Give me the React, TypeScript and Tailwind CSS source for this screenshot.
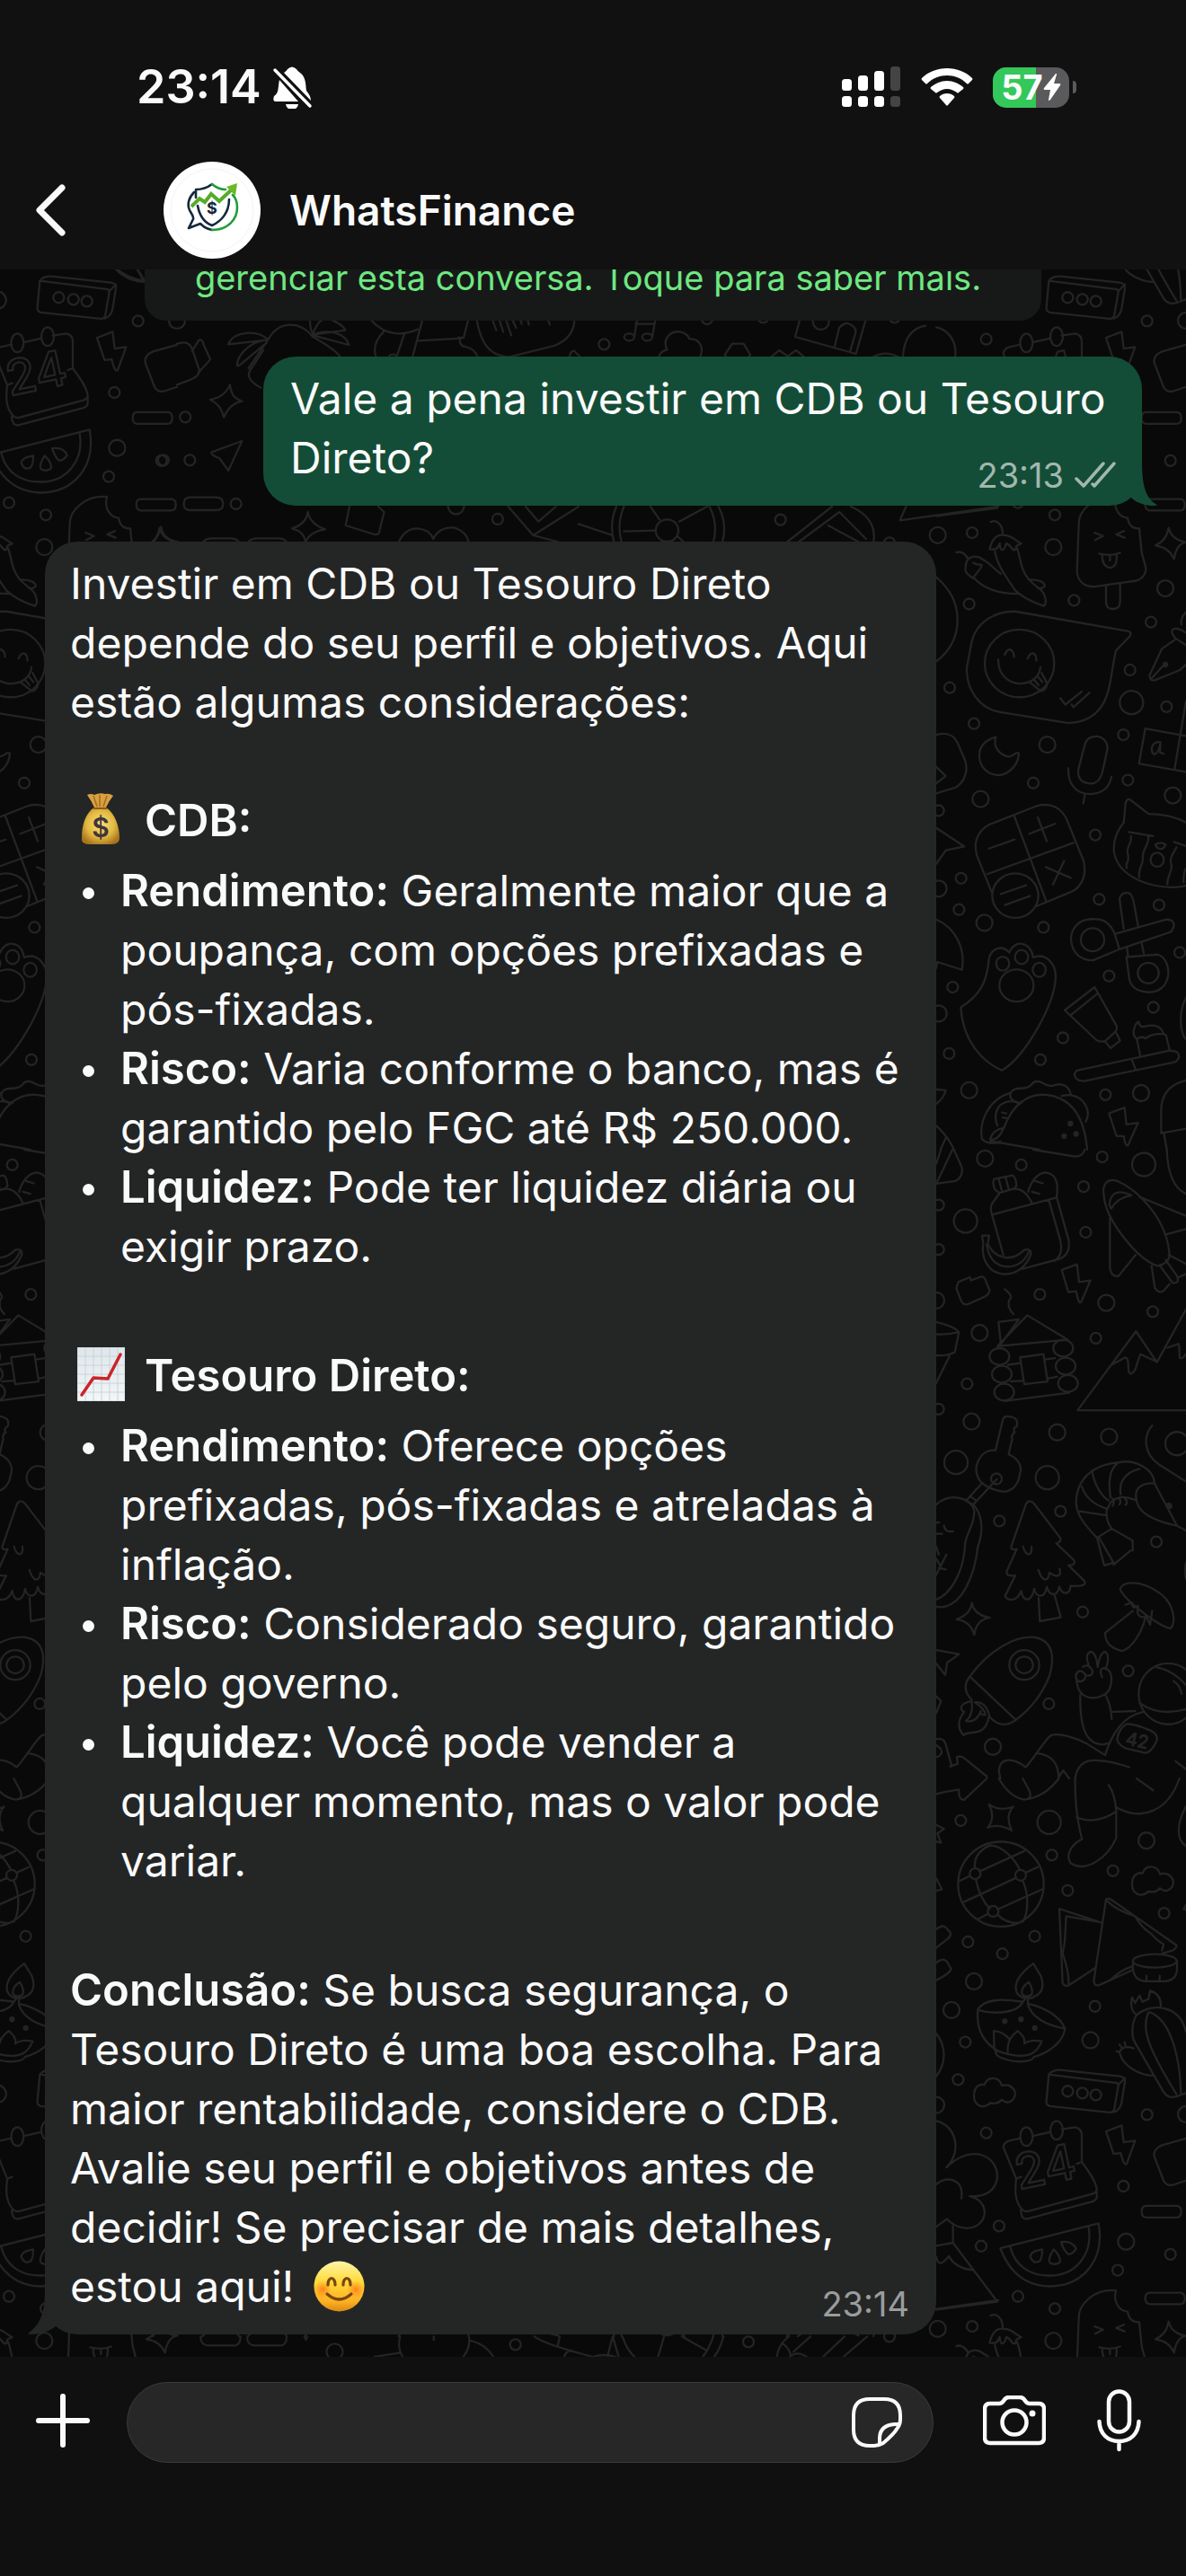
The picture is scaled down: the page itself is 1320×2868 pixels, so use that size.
import { useState } from 'react'

type Doodle = {
  x: number
  y: number
  sx: number
  sy: number
  small: number[][]
  medium: number[][]
  large?: number[][]
  filled?: number[][]
  ovals?: number[][]
  paths: string[]
}

// line drawings of the chat wallpaper, one entry per area of the tile
const doodles: Doodle[] = [
  {
    x: 1030, y: 560, sx: 3, sy: 2.178,
    small: [[156, 72], [432, 29], [496, 236], [146, 245], [753, 289], [81, 448], [683, 405], [805, 494], [162, 535], [661, 562], [360, 679], [676, 672], [44, 746], [567, 805], [119, 910], [112, 986], [394, 1029], [580, 961], [780, 975], [849, 1090], [613, 1147], [761, 1223], [91, 1174], [459, 1297], [79, 1335], [384, 1350], [601, 1435]],
    medium: [[41, 78], [427, 107], [801, 207], [407, 586], [184, 718], [826, 709], [44, 935], [197, 1018], [44, 1238], [146, 1424], [720, 1431]],
    large: [[688, 484]],
    filled: [[801, 392], [484, 1505], [463, 1535], [503, 1530]],
    ovals: [[314, 389, 116, 82], [300, 952, 77, 54], [774, 865, 22, 17], [558, 1059, 39, 28], [744, 1140, 35, 25], [258, 1117, 22, 17], [321, 1101, 22, 17], [380, 1132, 22, 17], [304, 1170, 57, 39]],
    paths: [
      'M218 46C240 38 258 55 258 75M214 112C225 80 245 76 262 78C290 78 300 92 320 98C310 104 300 100 302 112C290 120 285 100 270 98C262 120 250 118 248 98C238 118 225 112 214 112M232 118C240 150 265 175 300 212C330 232 360 240 395 250Q405 245 400 230C392 205 365 205 345 185C315 160 318 130 306 110M103 120C120 115 135 125 142 135M158 182C135 170 130 165 134 155C135 135 155 125 180 132L205 143C225 155 240 165 252 172M160 145Q170 150 188 150Q190 155 160 180C190 205 240 220 308 220M345 186C370 185 400 190 398 202C390 208 382 208 375 206',
      'M636 -15C560 -20 512 20 512 50L506 165C508 190 530 203 565 203L690 190C725 188 740 170 735 155L722 120L714 62C695 62 680 58 675 36C650 36 625 15 636 -15M603 200V240Q603 258 627 257Q650 257 650 238V198M565 72L593 80L567 90M663 68L637 76L665 84M580 123Q620 130 650 121M590 127Q590 155 617 157Q642 155 638 126M616 128V140',
      'M812 60Q820 88 868 95Q838 100 830 136Q815 108 768 103Q805 92 812 60Z',
      'M36 180C85 210 107 245 107 283C107 325 80 360 36 384',
      'M300 263L670 310Q695 312 680 325L636 358C620 410 620 440 605 468C580 520 520 535 470 533L250 507C180 500 135 450 138 400L155 335C170 290 230 262 300 263Z',
      'M265 368Q272 355 283 355Q295 360 296 373M341 377Q350 363 360 365Q372 370 370 382M243 380C243 415 275 438 317 438C355 438 382 420 384 398M350 436L385 456Q400 457 407 438L388 412M362 428L378 442M375 420L390 434M450 473L467 489L522 457M488 489L494 495L548 460',
      'M870 345L835 328Q818 315 825 307Q840 300 870 315M832 332L790 353L748 418Q750 432 765 430L850 405L870 392M752 428L792 396M870 265Q850 280 855 295',
      'M870 565L734 547L713 632L870 652M870 480L832 645M785 580Q765 578 757 590Q752 605 765 610Q780 605 785 580L783 605L795 608',
      'M36 562C70 555 100 562 112 590L133 625C145 655 125 680 100 690L36 704M36 640L68 662L36 680',
      'M235 567C200 575 178 590 180 615C182 645 215 660 245 660C280 658 310 635 312 608C300 600 300 615 275 615C245 610 225 590 235 567Z',
      'M530 592C535 570 555 565 575 566C600 570 612 585 606 602L590 655C582 675 565 682 545 680C520 678 506 665 511 645ZM477 643C475 680 500 705 550 706C590 704 615 690 621 664M532 708L527 728',
      'M222 945L172 855C155 815 185 785 230 775L370 735C420 725 455 740 472 768L528 868C540 905 520 935 480 945L370 978M296 758L403 965M206 900L494 824M212 838L298 816M347 802L432 778M375 762L405 820M402 883L485 909M426 925L463 868M252 948L336 927M265 975L349 953',
      'M36 788L130 833L68 842L36 875',
      'M870 775Q820 755 745 754L685 720Q670 715 668 730L662 775C640 795 625 820 630 848C645 905 740 930 820 932Q850 932 870 928M680 798L760 808M686 808C690 830 670 830 675 850C685 870 665 870 672 885M744 810C748 830 722 840 726 860C728 880 708 885 714 908M830 822L870 832M838 835C828 850 812 860 822 880C822 900 805 905 808 925M768 828Q785 820 802 828Q795 842 780 838Q770 836 768 828M868 888Q860 900 862 920',
      'M36 1010C100 1030 135 1080 122 1132L40 1113L36 1128',
      'M632 1045C615 1015 590 1007 552 1009C505 1012 485 1035 486 1060C490 1095 525 1110 560 1109L648 1082ZM632 1045L805 1010Q835 1010 828 1030L820 1040L648 1082M662 1032L648 960Q655 942 680 946Q692 952 696 970L710 1026M673 1080L677 1100M722 1068L729 1092M671 1101L775 1095C800 1100 812 1120 811 1143C805 1175 775 1188 740 1186C700 1183 680 1170 679 1145Z',
      'M118 1223C180 1195 205 1165 212 1105C220 1080 255 1070 280 1090C295 1060 350 1060 360 1102C400 1090 435 1115 435 1150C430 1220 330 1345 255 1376C190 1355 125 1305 118 1223Z',
      'M465 1230L565 1174L638 1268Q642 1278 630 1285L600 1305Q585 1308 572 1303ZM488 1240L574 1190M600 1306L618 1322L650 1304L638 1286',
      'M505 1376L815 1328Q850 1328 846 1345Q840 1355 830 1356L530 1402Q500 1402 497 1385ZM690 1351L702 1374M717 1340L706 1300Q690 1290 697 1275Q700 1262 712 1258Q715 1275 740 1268Q785 1262 796 1288L803 1290L815 1326M706 1300Q720 1292 735 1298Q760 1285 796 1288',
      'M870 1200Q850 1225 853 1262Q855 1290 870 1300M36 1422L68 1424Q60 1445 36 1457M36 1510Q75 1535 95 1568M68 1540L50 1568',
      'M250 1548C215 1560 190 1545 188 1540C180 1500 210 1445 285 1430C300 1410 340 1430 360 1405C390 1395 400 1420 430 1412C460 1405 480 1415 486 1436C530 1440 555 1475 535 1500M262 1515C290 1460 340 1432 400 1435C480 1440 530 1480 540 1568M262 1515Q225 1520 216 1542Q240 1550 262 1515M455 1438Q475 1435 486 1436M216 1547L380 1568M285 1430Q275 1450 320 1455M240 1510Q225 1480 250 1460Q280 1445 310 1455M256 1478L270 1480M258 1490L275 1492',
      'M613 1480L665 1466L671 1507L710 1503L676 1558Q668 1562 662 1535L638 1535Z',
      'M870 1400C810 1410 785 1440 787 1480V1528L870 1517M796 1528L806 1568',
    ],
  },
  {
    x: 1030, y: 1280, sx: 3, sy: 2.24,
    small: [[320, 38], [590, 18], [528, 92], [44, 138], [535, 206], [44, 249], [382, 361], [759, 404], [569, 470], [139, 584], [44, 647], [247, 926], [451, 902], [771, 978], [525, 1153], [677, 1300], [412, 1382], [237, 821]],
    medium: [[199, 22], [36, 376], [604, 382], [181, 457], [154, 678], [440, 705], [613, 716], [225, 1489]],
    large: [[729, 37], [134, 178], [840, 733], [102, 780], [407, 818]],
    filled: [[815, 889], [812, 887]],
    ovals: [[247, 516, 33, 21], [255, 560, 33, 21], [263, 605, 33, 21], [460, 495, 33, 21], [468, 540, 33, 21], [476, 583, 33, 21], [330, 1285, 50, 37], [330, 1285, 29, 21], [810, 1357, 98, 76]],
    paths: [
      'M36 35L52 0M36 85L90 0M36 85L100 78Q125 70 122 45L95 0M360 0L500 17Q525 17 532 0M806 0Q810 90 870 110',
      'M355 132Q330 95 295 98L304 90Q302 68 290 64L230 73Q222 80 232 100L248 108L222 135Q215 145 222 162L260 262M222 162L434 120M248 108L300 96M244 72L255 102M268 70L278 98M343 105Q360 62 400 57Q450 60 438 118L478 225Q485 260 450 272L325 297M412 126L450 225Q462 262 430 278M366 78L392 84M356 105L380 110M189 214H213L208 235C235 275 290 280 330 250Q355 245 352 262C325 310 270 320 225 302C190 280 190 250 193 235ZM204 236Q215 290 275 292Q325 290 345 255',
      'M455 300L506 286L513 330L551 326L520 380Q512 388 503 353L477 355Z',
      'M103 345L110 330L148 318L152 326L185 317Q198 315 203 330L214 350Q215 358 200 366L140 386Q125 388 118 375Z',
      'M596 115C588 85 610 70 640 78C720 105 810 180 815 265Q810 285 775 290C700 270 600 170 596 115ZM614 138Q620 90 688 114Q640 120 620 147ZM616 170V295Q620 318 645 315L702 262M715 118L870 165M800 212L870 198M812 262L870 285M755 290L766 345Q780 360 795 352L815 335M782 288L825 332Q850 335 840 315L802 275M845 318L870 310',
      'M240 490L340 413L475 474ZM244 430L312 423L252 485ZM265 348Q295 365 280 375Q272 395 294 410M316 518L394 510L408 578L330 585ZM275 537L318 532M402 523L432 520M285 578L325 576M408 571L440 566M263 627L480 606',
      'M870 650H508L703 453L773 530L870 398M625 535L668 518C685 522 670 555 685 559C705 555 705 530 718 510Q745 520 770 528M808 494L845 484Q850 500 848 518Q855 525 870 510',
      'M36 430Q95 440 112 455L98 505Q70 515 36 513M112 455Q75 462 36 460M80 515L36 582',
      'M234 750L258 675Q262 660 290 667Q312 672 305 690Q290 695 298 705Q285 712 290 722L285 735L278 760C310 770 325 790 315 810C310 840 280 860 240 850C190 840 165 820 170 790C180 760 205 748 234 750ZM185 835L135 876L160 885L238 822M150 865L170 875',
      'M36 885C80 855 150 865 163 900C165 940 130 960 132 990C125 1060 80 1110 36 1122M160 885C190 910 195 950 175 990C165 1060 120 1150 36 1140M62 938Q65 955 92 952M36 930H46M36 958H56M36 1060L70 1010M36 990L45 1010M45 1043L68 1047M36 1020L48 1035',
      'M335 885Q345 870 362 882L450 968Q455 978 437 982L495 1023Q505 1035 478 1037L530 1075Q545 1090 485 1088C480 1115 455 1108 447 1090C440 1115 415 1115 405 1090C400 1118 370 1120 363 1095C355 1128 325 1130 320 1100C305 1130 270 1125 266 1113L300 1062Q265 1065 272 1050L305 996Q280 1000 289 985ZM378 1118L382 1176L452 1166L432 1113M326 990C335 1015 358 1015 354 990M377 1048C390 1078 410 1080 414 1055C440 1068 455 1065 448 1045',
      'M155 1130Q162 1160 215 1167Q170 1172 163 1210Q150 1175 104 1171Q150 1160 155 1130Z',
      'M645 780C560 785 505 820 503 880C505 910 530 935 573 968L622 945Q602 925 605 900L618 880C640 865 660 862 705 875C695 845 720 830 765 832L840 938L870 950M645 780C690 772 760 790 765 832M705 875C710 905 760 925 840 938M645 780C615 795 610 830 618 868M715 796C665 805 645 830 652 860M556 800C565 840 590 865 612 875M522 840Q540 880 604 895M516 902L605 912M573 968L597 1037L628 1030L580 968M628 1035L685 1000M622 945L692 975V1000M625 870Q632 880 625 888M645 868Q655 875 648 885M665 868Q678 880 668 886',
      'M757 688C725 715 730 760 780 785L870 828M870 1030Q865 1050 870 1070',
      'M650 1095C660 1075 720 1075 770 1100C830 1125 840 1180 818 1194C770 1185 660 1120 650 1095ZM693 1150L600 1205Q600 1240 655 1250C690 1245 725 1200 735 1165M668 1135L690 1130Q690 1148 710 1138Q700 1170 735 1165M735 1160L750 1185L757 1150',
      'M36 1248L112 1258L72 1280L66 1310L36 1282M36 1363L52 1375L36 1405',
      'M150 1312C210 1250 300 1210 365 1216C430 1225 430 1270 415 1310C390 1360 350 1395 302 1422C270 1440 240 1435 215 1415M150 1312C130 1330 125 1350 155 1372M150 1315L302 1422M155 1375C110 1380 115 1400 130 1402C100 1430 115 1450 127 1460C150 1445 200 1470 213 1410Q200 1375 165 1378Q200 1395 200 1410Q180 1410 185 1400Q170 1430 135 1425Q160 1410 155 1375',
      'M545 1285Q530 1255 555 1252Q572 1260 575 1290Q582 1255 600 1252Q618 1260 602 1295C630 1300 625 1345 600 1358C560 1375 510 1370 505 1325M590 1315Q575 1290 605 1293M525 1290Q545 1280 558 1300Q560 1312 540 1312M502 1310Q515 1290 535 1310Q535 1325 515 1327Q500 1322 502 1310M517 1360C515 1430 530 1485 595 1483L615 1480M600 1358Q620 1385 622 1420',
      'M715 1380Q780 1415 870 1395M770 1290Q830 1300 870 1335M828 1325Q850 1335 855 1357M625 1402L700 1400M730 1402C660 1410 620 1460 600 1510L540 1482C500 1465 450 1455 420 1460C400 1470 370 1510 335 1540C300 1520 250 1510 245 1550L250 1568M370 1505Q445 1510 445 1568M445 1565L460 1548L480 1568M500 1568Q510 1520 570 1523Q620 1525 680 1540M835 1525L870 1545M670 1433Q690 1430 740 1445Q780 1455 772 1475Q750 1510 725 1503L665 1492Q640 1480 640 1470Q645 1445 670 1433',
      'M36 1470Q65 1465 70 1490L88 1538M36 1515Q60 1510 52 1495L36 1485M82 1538L108 1532L105 1515Q120 1510 130 1518L205 1563',
    ],
  },
  {
    x: 1030, y: 1980, sx: 3, sy: 2.412,
    small: [[118, 113], [422, 206], [475, 301], [626, 248], [797, 362], [365, 424], [142, 439], [257, 471], [566, 612], [133, 708], [109, 809], [740, 903], [203, 952], [661, 1095], [246, 1202], [186, 1256], [818, 1278], [642, 1321], [309, 1391], [166, 256], [318, 260], [226, 357], [475, 840], [524, 845], [569, 850]],
    medium: [[738, 167], [162, 545], [87, 622], [551, 703], [670, 1244], [36, 877], [870, 902]],
    large: [[413, 118]],
    filled: [[265, 652], [319, 647], [365, 670]],
    ovals: [[252, 284, 143, 114], [766, 490, 73, 18], [337, 962, 21, 25], [438, 945, 21, 25]],
    paths: [
      'M36 42Q70 35 112 30Q110 60 130 57L205 0M245 0Q280 50 330 57Q360 55 345 30L325 0M330 57Q400 50 445 0',
      'M500 0Q498 90 523 163C490 175 465 205 485 228C540 255 610 210 637 160V85Q632 40 612 18M505 105Q570 125 635 90M637 78C720 115 810 90 848 0M705 0L760 32M870 75C840 120 835 165 870 182',
      'M212 70Q250 90 293 76Q265 100 288 140Q245 120 208 132Q235 105 212 70Z',
      'M165 240Q160 200 215 180C260 180 300 220 315 245M168 270Q180 320 215 350M240 365Q270 390 310 388M325 275C345 310 345 360 325 385M115 275L148 262M180 250L330 195M128 332L300 268M335 253L375 238M175 378L208 364M240 352L390 298',
      'M690 285C690 255 715 252 725 255C735 230 775 232 783 257C815 250 830 270 827 283C820 305 795 305 783 295C770 308 750 305 745 303C715 325 690 305 690 285Z',
      'M162 853C162 823 187 820 197 823C207 798 247 800 255 825C287 818 302 838 299 851C292 873 267 873 255 863C242 876 222 873 217 871C187 893 162 873 162 853Z',
      'M590 388L447 350L458 550Q465 560 478 556L565 510M575 385L470 370L465 440L458 470Q480 520 478 553M690 515L580 555Q565 558 562 545L603 325Q610 320 625 328L838 448Q840 455 825 462L790 470M608 330Q640 355 700 370Q720 400 750 415Q780 440 795 445L790 462M620 540Q650 515 690 505',
      'M693 490V515Q700 545 740 545H795Q835 545 840 515V490M738 530V545M782 530V545',
      'M36 268L55 298L36 302M36 405Q60 390 70 402L84 415Q85 425 75 430L36 455M36 495Q60 480 72 492L86 512Q80 525 36 542M36 125L62 135L40 148L52 173L36 170M870 340L862 350L870 353',
      'M360 497C305 530 295 555 305 575C320 595 355 592 365 585C395 575 395 550 385 530ZM345 547Q320 560 322 578Q335 592 355 580Q360 565 345 547M335 590L325 600C260 592 200 590 175 620C170 660 180 700 235 728Q230 745 260 752C300 765 355 762 362 748C420 735 460 705 466 672C450 640 400 615 342 605V592M175 622C230 635 310 630 325 600M342 608C360 650 420 665 466 672M228 678L230 728Q280 745 320 745Q370 745 388 706Q350 700 330 712Q335 695 308 678Q270 700 275 735M228 678Q260 680 280 700',
      'M705 635C685 625 685 600 690 588L700 603L715 583L725 600L745 592L750 570Q790 580 785 615M870 680C850 610 760 600 705 635C690 655 685 690 700 710L790 835Q805 860 835 855L870 845M745 628C720 670 740 720 838 848M750 628C820 650 850 750 853 845M695 725Q660 715 648 735C655 765 700 795 757 798M648 735L638 733M655 722L648 715M668 718L665 708',
      'M412 795L640 818Q645 822 643 830L630 890Q625 898 615 897L415 880Q402 877 404 865ZM412 795Q425 782 450 783L650 800Q668 803 666 815L655 870Q650 890 630 896M645 822L666 805M36 685C70 720 70 765 36 800',
      'M36 920C100 930 125 1000 70 1045C150 980 240 1010 240 1070C235 1110 195 1125 148 1122C220 1135 210 1205 140 1208C110 1208 85 1195 72 1183L36 1204M36 1090C70 1065 130 1075 120 1128M92 1195V1247L36 1255M92 1247L240 1405L36 1427M36 1285C45 1320 70 1290 78 1283Q100 1315 155 1320',
      'M318 966L280 973Q262 978 260 990L303 1075C300 1100 295 1130 320 1155Q325 1162 340 1163L560 1115Q570 1112 572 1105C570 1080 540 1050 522 1030V960Q522 940 500 937L455 942M358 960L415 950M572 1110V1125Q570 1133 555 1137L340 1183Q320 1185 318 1160M303 1075L320 1070M505 1035L522 1030',
      'M603 948L655 932L662 977L700 973L672 1035Q662 1042 652 1006L628 1008Z',
      'M870 967L790 985Q760 995 764 1015L795 1080Q805 1095 825 1092L870 1080',
      'M735 1148H840Q854 1150 854 1163Q854 1179 838 1179H737Q722 1178 722 1163Q722 1150 735 1148ZM747 1381H852Q866 1383 866 1396Q866 1412 850 1412H749Q734 1411 734 1396Q734 1383 747 1381Z',
      'M250 1262L578 1195C600 1290 530 1364 412 1364C330 1362 280 1325 250 1262ZM284 1260C300 1310 350 1336 415 1335C500 1335 560 1280 545 1205M390 1265Q350 1270 350 1285Q360 1305 380 1297Q390 1290 390 1265ZM428 1265Q405 1295 418 1302Q440 1308 450 1298Q450 1280 428 1265ZM453 1245Q490 1240 503 1263Q490 1280 475 1277Q460 1265 453 1245Z',
    ],
  },
  {
    x: 0, y: 300, sx: 3, sy: 3,
    small: [], medium: [],
    paths: [
      'M830 330L895 235C930 170 1000 170 1045 225C1080 245 1120 270 1135 290M762 250C780 205 860 200 895 235ZM895 235C830 240 790 290 792 322L800 320L890 245M1035 170Q1035 200 1045 215Q1060 175 1075 170M1110 170Q1145 185 1153 203L1045 218C1100 195 1155 215 1165 252L1045 220M1240 170C1290 225 1350 220 1395 200M1410 170L1378 290M1283 205Q1240 250 1255 290M1350 215L1325 290M1395 238L1540 230M1300 288Q1310 280 1325 288M392 0Q430 30 480 38L458 0',
    ],
  },
  {
    x: 510, y: 300, sx: 3, sy: 3,
    small: [[487, 250], [831, 165], [1018, 160], [1457, 160]],
    medium: [[1211, 174]],
    ovals: [[571, 226, 17, 12], [631, 226, 17, 12]],
    paths: [
      'M33 170L18 228H0M5 232Q5 258 25 258Q55 265 65 292M62 170C75 240 100 290 170 292L320 255Q385 230 388 170M115 170L127 203M138 170L150 208M160 170L177 220M182 170L193 195M208 170L212 182M232 170L236 184M300 170L306 184M597 170L588 225M658 170L648 225M592 182H655M372 292Q375 270 388 272L405 290',
      'M670 292Q675 272 697 268C680 230 710 205 740 208Q765 212 772 232C810 230 820 265 808 292M895 292L890 285L915 248H953L975 285L970 292M1045 292L1072 270L1100 290L1128 270L1155 292M1140 170L1125 225L1328 282L1360 170M1256 262L1272 195Q1285 180 1300 180Q1330 190 1327 210L1308 275M1385 292Q1425 270 1470 292M1485 292Q1490 200 1560 188',
    ],
  },
  {
    x: 0, y: 370, sx: 1.188, sy: 3,
    small: [[245, 283], [216, 427], [251, 427], [312, 573], [658, 624], [1032, 626]],
    medium: [[603, 580]],
    ovals: [[882, 662, 15, 37]],
    paths: [
      'M234 38L240 35Q250 30 254 55L264 130Q262 150 250 160L234 175M254 62L263 26Q268 22 269 40L278 90Q276 98 262 135',
      'M304 175C306 215 312 222 320 230C308 235 300 260 296 284Q292 240 278 225Q298 215 304 175ZM348 60L330 130Q325 160 345 185M320 363L280 400Q278 410 290 420L302 462ZM252 551H285Q295 551 295 573Q295 594 285 594H252Q243 594 243 573Q243 551 252 551Z',
      'M407 600Q410 640 430 658Q410 665 404 700Q402 665 386 655Q405 640 407 600ZM462 582L457 645L495 675Q502 678 502 660L508 600L500 582M527 702Q535 655 552 655Q568 658 573 690Q580 650 600 652Q617 665 620 702M672 582L705 678L738 700M765 582L705 678M765 640L810 678M695 582L712 632L735 582',
      'M815 582Q805 640 812 702M825 582Q815 640 822 702M938 582Q950 640 943 702M950 582Q962 640 955 702M825 665L866 662M898 632L935 582M860 582L872 625M895 680L905 702M1040 702L1100 582M1055 702L1110 600L1145 690M1095 645L1135 700M1125 582Q1160 620 1155 702M1198 582L1190 628L1320 582',
      'M213 650Q215 690 235 700M213 650Q210 680 202 702M268 702Q270 690 280 688H305Q315 690 316 702M328 702Q330 690 340 688H368Q378 690 379 702',
    ],
  },
  {
    x: 0, y: 2480, sx: 2.376, sy: 3,
    small: [[1363, 391]],
    medium: [[885, 415]],
    paths: [
      'M531 364V375Q535 393 550 394H622Q636 390 636 364M654 364V375Q658 393 672 394H745Q758 390 758 364M805 364L809 375L813 364M1058 364Q1050 400 1065 432M1240 364Q1245 400 1225 432M1245 378Q1285 390 1305 432M990 432L1060 418M1147 364V376M1413 364Q1440 390 1568 432M1480 364L1475 395M1492 432Q1495 415 1510 410',
    ],
  },
  {
    x: 660, y: 2480, sx: 2.376, sy: 3,
    small: [[411, 382], [784, 364]],
    medium: [],
    paths: [
      'M38 432L52 364L68 432M78 364Q90 410 110 432M172 432L188 364M235 364L300 410M318 364Q305 410 290 432M345 364Q335 410 320 432M486 432Q490 390 518 364M500 385Q525 410 522 432M530 415L575 364M608 432L665 364M662 432L725 364M0 432Q30 420 60 432M520 432Q540 410 565 432',
    ],
  },
]

const TILE_W = 1123
const TILE_H = 1997
const HEADER_H = 300

function DoodleArea({ area }: { area: Doodle }) {
  const { x, y, sx, sy } = area
  const ring = (list: number[][] | undefined, r: number) =>
    (list ?? []).map(([cx, cy]) => (
      <circle key={`${cx}-${cy}`} cx={x + cx / sx} cy={y + cy / sy} r={r} />
    ))

  return (
    <g>
      {ring(area.small, 6)}
      {ring(area.medium, 9)}
      {ring(area.large, 13)}
      <g fill="#242424">{ring(area.filled, 2)}</g>
      {(area.ovals ?? []).map(([cx, cy, rx, ry]) => (
        <ellipse key={`${cx}-${cy}-${rx}`} cx={x + cx / sx} cy={y + cy / sy} rx={rx / sx} ry={ry / sy} />
      ))}
      <g transform={`translate(${x} ${y}) scale(${1 / sx} ${1 / sy})`}>
        {area.paths.map(d => (
          <path key={d} d={d} vectorEffect="non-scaling-stroke" />
        ))}
      </g>
    </g>
  )
}

function Wallpaper() {
  return (
    <svg className="absolute inset-0 h-full w-full" aria-hidden="true">
      <g
        transform={`translate(0 ${-HEADER_H})`}
        fill="none"
        stroke="#242424"
        strokeWidth="2.3"
        strokeLinecap="round"
        strokeLinejoin="round"
      >
        {[0, -TILE_W].map(dx =>
          [0, -TILE_H, TILE_H].map(dy => (
            <g key={`${dx}-${dy}`} transform={`translate(${dx} ${dy})`}>
              {doodles.map(area => (
                <DoodleArea key={`${area.x}-${area.y}`} area={area} />
              ))}
            </g>
          ))
        )}
        <g fontFamily="Inter, sans-serif">
          <text x="1134" y="2438" fontSize="54" fontWeight="500" transform="rotate(-12 1134 2438)">24</text>
          <text x="1134" y="441" fontSize="54" fontWeight="500" transform="rotate(-12 1134 441)">24</text>
          <text x="11" y="441" fontSize="54" fontWeight="500" transform="rotate(-12 11 441)">24</text>
          <text x="1252" y="1942" fontSize="20" strokeWidth="1" fill="#242424" transform="rotate(12 1252 1942)">42</text>
        </g>
      </g>
    </svg>
  )
}

function StatusBar() {
  return (
    <div className="flex h-[150px] items-center justify-between pt-11 pr-[122px] pl-[152px]">
      <div className="flex items-center gap-3">
        <span className="text-[52px] leading-[60px] font-semibold">23:14</span>
        <svg width="46" height="48" viewBox="0 0 46 48" fill="#fff" aria-label="Silencioso">
          <path d="M8 16 C6 24 8 30 2 34 Q0 40 4 40 H29 Z" />
          <path d="M13 8 Q16 6 17 4 Q22 -1 27 4 Q28 6 31 8 C38 13 37 22 38 28 Q43 34 43 39 Z" />
          <path d="M15 43 H29 Q28 49 22 49 Q16 49 15 43Z" />
          <path d="M3 5 L42 45" stroke="#fff" strokeWidth="3.5" strokeLinecap="round" />
        </svg>
      </div>
      <div className="flex items-center">
        <svg width="66" height="46" viewBox="0 0 66 46" fill="#fff" aria-label="Sinal">
          <rect x="0" y="14" width="11" height="13" rx="3.5" />
          <rect x="18" y="10" width="11" height="17" rx="3.5" />
          <rect x="36" y="5" width="11" height="22" rx="3.5" />
          <rect x="54" y="0" width="11" height="27" rx="3.5" fill="#444" />
          <rect x="0" y="33" width="11" height="12" rx="3.5" />
          <rect x="18" y="33" width="11" height="12" rx="3.5" />
          <rect x="36" y="33" width="11" height="12" rx="3.5" />
          <rect x="54" y="33" width="11" height="12" rx="3.5" fill="#444" />
        </svg>
        <svg className="ml-[22px]" width="58" height="44" viewBox="0 0 58 44" fill="#fff" aria-label="Wi-Fi">
          <path d="M29 1 C18 1 8 5 1 12 Q0 13 1 14 L5 18 Q6 19 7 18 C13 12 21 9 29 9 C37 9 45 12 51 18 Q52 19 53 18 L57 14 Q58 13 57 12 C50 5 40 1 29 1Z" />
          <path d="M29 15 C22 15 16 18 11 22 Q10 23 11 24 L16 28 Q17 29 18 28 C21 26 25 24 29 24 C33 24 37 26 40 28 Q41 29 42 28 L47 24 Q48 23 47 22 C42 18 36 15 29 15Z" />
          <path d="M29 29 C26 29 23 30 21 32 Q20 33 21 34 L28 42 Q29 43 30 42 L37 34 Q38 33 37 32 C35 30 32 29 29 29Z" />
        </svg>
        <div className="relative ml-[22px] flex h-[45px] w-[85px] items-center justify-center overflow-hidden rounded-[15px] bg-[#5a5a5c]">
          <div className="absolute inset-y-0 left-0 w-12 bg-[#34c759]" />
          <span className="relative text-[38px] leading-[45px] font-bold">57</span>
          <svg className="relative" width="20" height="30" viewBox="0 0 20 30" fill="#fff" aria-hidden="true">
            <path d="M14 0 L1 16 Q0 18 2 18 H8 L6 29 Q6 31 8 29 L19 13 Q20 11 18 11 H12 L15 1 Q15 -1 14 0Z" />
          </svg>
        </div>
        <div className="ml-1 h-[14px] w-1 rounded-r-full bg-[#5a5a5c]" />
      </div>
    </div>
  )
}

function Avatar() {
  return (
    <svg width="108" height="108" viewBox="0 0 108 108" fill="none" strokeLinecap="round" strokeLinejoin="round" aria-hidden="true">
      <circle cx="54" cy="54" r="54" fill="#fff" />
      <circle cx="54" cy="54" r="46" stroke="#f3f3f3" />
      <g stroke="#14283c" strokeWidth="2.6">
        <path d="M34 34 C28 40 26 48 29 54 C31 58 34 61 33 64 L28 74 L41 69 Q47 75 54 76" />
        <path d="M54 25 Q46 31 36 31 V40" />
        <path d="M38 49 C40 60 46 68 54 71 C65 66 73 56 73 42" />
      </g>
      <g stroke="#1f9d3a" strokeWidth="2.6">
        <path d="M54 25 Q61 31 69 31" />
        <path d="M54 76 C72 76 82 64 82 51 C82 45 80 40 77 37" />
      </g>
      <path d="M31 50 L40 41 L46 45 L53 36 L62 44 L77 30" stroke="#56ab2a" strokeWidth="4" strokeLinecap="butt" strokeLinejoin="miter" />
      <path d="M82 24 L70 28 L80 38Z" fill="#6bb82d" />
      <text x="54" y="58" textAnchor="middle" fontSize="18" fontWeight="700" fontFamily="Inter, sans-serif" fill="#14283c">$</text>
    </svg>
  )
}

function MoneyBag() {
  return (
    <svg className="mr-7 ml-3 inline-block align-[-9px]" width="43" height="57" viewBox="0 0 43 57" role="img" aria-label="Saco de dinheiro">
      <defs>
        <radialGradient id="bag" cx="0.5" cy="0.45" r="0.6">
          <stop offset="0" stopColor="#f9e37a" />
          <stop offset="0.6" stopColor="#e2b941" />
          <stop offset="1" stopColor="#a9741c" />
        </radialGradient>
      </defs>
      <path d="M7 2 Q11 0 15 2 Q21 -1 27 1 Q32 0 36 3 Q31 9 28 16 H15 Q12 9 7 2Z" fill="#d9a042" />
      <path d="M14 3 L18 15 M21 2 V15 M29 3 L25 15" stroke="#a46c1e" strokeWidth="1.5" />
      <path d="M15 16 H28 C38 22 43 38 43 50 Q43 57 34 57 H9 Q0 57 1 50 C1 36 5 22 15 16Z" fill="url(#bag)" />
      <path d="M14 17 H29" stroke="#8d5a1a" strokeWidth="2" />
      <text x="22" y="49" textAnchor="middle" fontSize="30" fontWeight="600" fontFamily="Inter, sans-serif" fill="#42353a">$</text>
    </svg>
  )
}

function ChartUp() {
  return (
    <svg className="mr-[22px] ml-2 inline-block align-[-11px]" width="53" height="60" viewBox="0 0 53 60" role="img" aria-label="Gráfico subindo">
      <defs>
        <linearGradient id="paper" x1="0" y1="0" x2="0" y2="1">
          <stop offset="0" stopColor="#dfe6ea" />
          <stop offset="1" stopColor="#f4f6f7" />
        </linearGradient>
      </defs>
      <rect width="53" height="60" fill="url(#paper)" />
      <path d="M0 0H53V60H0Z M9 0V60 M18 0V60 M27 0V60 M36 0V60 M45 0V60 M0 10H53 M0 20H53 M0 30H53 M0 40H53 M0 50H53" stroke="#c6d4dc" strokeWidth="1" fill="none" />
      <path d="M5 53 L18 34 L34 35 L48 8" stroke="#c9242b" strokeWidth="3.5" fill="none" strokeLinejoin="round" strokeLinecap="round" />
    </svg>
  )
}

function Smile() {
  return (
    <svg className="ml-2 inline-block align-[-11px]" width="57" height="57" viewBox="0 0 57 57" role="img" aria-label="Rosto sorridente">
      <defs>
        <linearGradient id="face" x1="0" y1="0" x2="0" y2="1">
          <stop offset="0" stopColor="#fff6a8" />
          <stop offset="0.4" stopColor="#ffdb3c" />
          <stop offset="0.8" stopColor="#fdb022" />
          <stop offset="1" stopColor="#d98a14" />
        </linearGradient>
        <radialGradient id="cheek">
          <stop offset="0" stopColor="#ff7a1a" stopOpacity="0.9" />
          <stop offset="1" stopColor="#ff8c1a" stopOpacity="0" />
        </radialGradient>
      </defs>
      <circle cx="28.5" cy="28.5" r="28" fill="url(#face)" />
      <circle cx="10" cy="32" r="10" fill="url(#cheek)" />
      <circle cx="47" cy="32" r="10" fill="url(#cheek)" />
      <g fill="none" stroke="#7a4610" strokeWidth="3.2" strokeLinecap="round">
        <path d="M16 27 C16 17 24 17 24 27" />
        <path d="M33 27 C33 17 41 17 41 27" />
        <path d="M15 37 Q28.5 49 42 37" />
      </g>
    </svg>
  )
}

const cdb = [
  { label: 'Rendimento:', text: ' Geralmente maior que a\npoupança, com opções prefixadas e\npós-fixadas.' },
  { label: 'Risco:', text: ' Varia conforme o banco, mas é\ngarantido pelo FGC até R$ 250.000.' },
  { label: 'Liquidez:', text: ' Pode ter liquidez diária ou\nexigir prazo.' },
]

const tesouro = [
  { label: 'Rendimento:', text: ' Oferece opções\nprefixadas, pós-fixadas e atreladas à\ninflação.' },
  { label: 'Risco:', text: ' Considerado seguro, garantido\npelo governo.' },
  { label: 'Liquidez:', text: ' Você pode vender a\nqualquer momento, mas o valor pode\nvariar.' },
]

function BulletList({ items }: { items: { label: string; text: string }[] }) {
  return (
    <ul className="my-3">
      {items.map(item => (
        <li key={item.label} className="flex">
          <span className="mt-[29px] ml-[14px] h-[13px] w-[13px] shrink-0 rounded-full bg-[#fafafa]" />
          <p className="ml-[29px] whitespace-pre-line">
            <strong className="text-[49px] font-semibold">{item.label}</strong>
            {item.text}
          </p>
        </li>
      ))}
    </ul>
  )
}

export default function App() {
  const [message, setMessage] = useState('')

  return (
    <div className="flex min-h-screen flex-col bg-[#101010] font-['Inter','Liberation_Sans',sans-serif] text-[#fafafa]">
      <header className="h-[300px] bg-[#111111]">
        <StatusBar />
        <div className="flex items-center pt-[30px] pl-10">
          <button type="button" aria-label="Voltar">
            <svg width="34" height="58" viewBox="0 0 34 58" fill="none" stroke="#fafafa" strokeWidth="7" strokeLinecap="round" strokeLinejoin="round">
              <path d="M29 4 L4 29 L29 54" />
            </svg>
          </button>
          <div className="ml-[108px]">
            <Avatar />
          </div>
          <h1 className="ml-8 text-[46px] leading-[60px] font-semibold">WhatsFinance</h1>
        </div>
      </header>

      <main className="relative flex flex-1 flex-col overflow-hidden bg-[#090909] pb-6">
        <Wallpaper />

        <button
          type="button"
          className="relative -mt-8 self-center rounded-[24px] bg-[#171918] pt-4 pr-[67px] pb-[23px] pl-14 text-[38px] leading-[50px] text-[#6fe882]"
        >
          gerenciar esta conversa. Toque para saber mais.
        </button>

        {/* mensagem enviada */}
        <div className="relative mt-10 mr-[49px] w-[978px] self-end rounded-[36px] bg-[#144d37] px-[30px] pt-[14px] pb-5">
          <p className="text-[48px] leading-[66px] whitespace-pre-line">
            {'Vale a pena investir em CDB ou Tesouro\nDireto?'}
          </p>
          <div className="absolute right-[29px] bottom-3 flex items-center gap-3 text-[38px] leading-[44px] text-[#a1b8af]">
            <span>23:13</span>
            <svg width="46" height="30" viewBox="0 0 46 30" fill="none" stroke="#a1b8af" strokeWidth="3.5" strokeLinecap="round" strokeLinejoin="round" aria-label="Entregue">
              <path d="M2 19 L10 27 L32 2" />
              <path d="M20 25 L22 27 L44 2" />
            </svg>
          </div>
          <svg className="absolute -right-[17px] bottom-0" width="32" height="50" viewBox="0 0 32 50" fill="#144d37" aria-hidden="true">
            <path d="M0 0 H15 C15 25 18 42 32 49 Q31 50 29 50 C18 50 9 47 3 41 L0 35Z" />
          </svg>
        </div>

        {/* resposta recebida */}
        <div className="relative mt-10 ml-[50px] w-[992px] rounded-[36px] bg-[#242626] pt-[14px] pr-4 pb-5 pl-7 text-[48px] leading-[66px]">
          <p className="whitespace-pre-line">
            {'Investir em CDB ou Tesouro Direto\ndepende do seu perfil e objetivos. Aqui\nestão algumas considerações:'}
          </p>

          <h2 className="mt-[66px] h-[66px] text-[49px] font-semibold">
            <MoneyBag />
            CDB:
          </h2>
          <BulletList items={cdb} />

          <h2 className="mt-[78px] h-[66px] text-[49px] font-semibold">
            <ChartUp />
            Tesouro Direto:
          </h2>
          <BulletList items={tesouro} />

          <p className="mt-[78px] whitespace-pre-line">
            <strong className="text-[49px] font-semibold">Conclusão:</strong>
            {' Se busca segurança, o\nTesouro Direto é uma boa escolha. Para\nmaior rentabilidade, considere o CDB.\nAvalie seu perfil e objetivos antes de\ndecidir! Se precisar de mais detalhes,\nestou aqui! '}
            <Smile />
          </p>

          <span className="absolute right-[30px] bottom-3 text-[38px] leading-[44px] text-[#9b9c9c]">23:14</span>
          <svg className="absolute bottom-0 -left-[19px]" width="34" height="50" viewBox="0 0 34 50" fill="#242626" aria-hidden="true">
            <path d="M34 0 H19 C19 22 16 38 0 49 Q1 50 4 50 C14 50 25 46 31 41 L34 35Z" />
          </svg>
        </div>
      </main>

      <footer className="flex h-[244px] items-start bg-[#101010] pt-7 pr-[50px] pl-10">
        <button type="button" className="flex h-[86px] items-center" aria-label="Anexar">
          <svg width="60" height="60" viewBox="0 0 60 60" fill="none" stroke="#fafafa" strokeWidth="6" strokeLinecap="round">
            <path d="M30 3 V57 M3 30 H57" />
          </svg>
        </button>
        <div className="ml-[41px] flex h-[90px] flex-1 items-center rounded-full border border-[#3a3a3a] bg-[#272727] pr-[34px] pl-10">
          <input
            type="text"
            aria-label="Mensagem"
            value={message}
            onChange={e => setMessage(e.target.value)}
            className="h-full min-w-0 flex-1 bg-transparent text-[48px] outline-none"
          />
          <button type="button" aria-label="Figurinhas">
            <svg width="56" height="56" viewBox="0 0 56 56" fill="none" stroke="#fafafa" strokeWidth="4" strokeLinejoin="round">
              <path d="M20 2 H36 Q54 2 54 20 V25 Q54 30 51 34 C47 41 41 46 35 51 Q30 54 25 54 H20 Q2 54 2 36 V20 Q2 2 20 2Z" />
              <path d="M53 30 H48 Q31 31 31 46 V53" />
            </svg>
          </button>
        </div>
        <button type="button" className="ml-[55px] flex h-[86px] items-center" aria-label="Câmera">
          <svg width="70" height="56" viewBox="0 0 70 56" fill="none" stroke="#fafafa" strokeWidth="4.5" strokeLinejoin="round">
            <path d="M8 9 H18 Q21 9 23 6 Q25 2 29 2 H41 Q45 2 47 6 Q49 9 52 9 H62 Q68 9 68 15 V47 Q68 53 62 53 H8 Q2 53 2 47 V15 Q2 9 8 9Z" />
            <circle cx="35" cy="30" r="13.5" />
            <circle cx="55" cy="20" r="3.5" fill="#fafafa" stroke="none" />
          </svg>
        </button>
        <button type="button" className="ml-[57px] flex h-[86px] items-center" aria-label="Gravar áudio">
          <svg width="49" height="70" viewBox="0 0 49 70" fill="none" stroke="#fafafa" strokeWidth="4.5" strokeLinecap="round">
            <rect x="13" y="2.5" width="23" height="45" rx="11.5" />
            <path d="M2.5 36 C3 50 12 58 24.5 58 C37 58 46 50 46.5 36 M24.5 58 V67" />
          </svg>
        </button>
      </footer>
    </div>
  )
}
